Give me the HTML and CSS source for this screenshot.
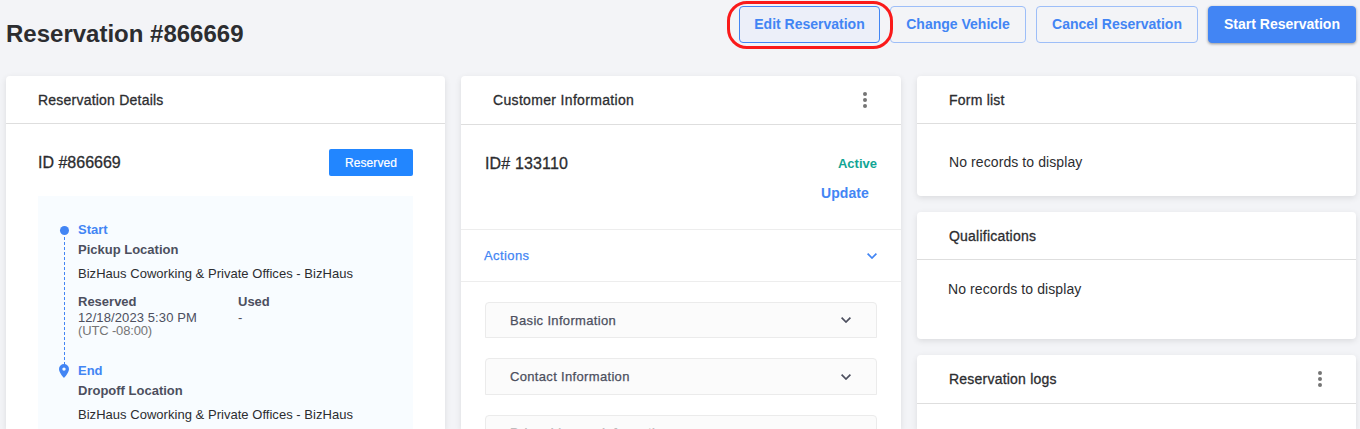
FILE: index.html
```html
<!DOCTYPE html>
<html lang="en">
<head>
<meta charset="UTF-8">
<meta name="viewport" content="width=device-width, initial-scale=1.0">
<title>Reservation #866669</title>
<link rel="stylesheet" href="styles.css">
</head>
<body>

    <header class="page-header">
        <h1>Reservation #866669</h1>
        <div class="actions">
            <button class="btn btn-edit">Edit Reservation<span class="highlight"></span></button>
            <button class="btn btn-change">Change Vehicle</button>
            <button class="btn btn-cancel">Cancel Reservation</button>
            <button class="btn btn-primary">Start Reservation</button>
        </div>
    </header>

    <main class="columns">

        <section class="card details">
            <div class="card-header"><h2>Reservation Details</h2></div>
            <div class="details-body">
                <div class="id-row">
                    <span class="id">ID #866669</span>
                    <span class="badge">Reserved</span>
                </div>
                <div class="timeline">
                    <div class="stop">
                        <div class="marker">
                            <span class="dot"></span>
                            <svg class="line" width="1" height="128"><path d="M.5 0V128" stroke="#4285f4" stroke-dasharray="3 2"/></svg>
                        </div>
                        <div class="stop-info">
                            <div class="stop-name">Start</div>
                            <div class="stop-label">Pickup Location</div>
                            <div class="stop-place">BizHaus Coworking &amp; Private Offices - BizHaus</div>
                            <div class="times">
                                <div>
                                    <b>Reserved</b>
                                    <div class="date">12/18/2023 5:30 PM</div>
                                    <div class="zone">(UTC -08:00)</div>
                                </div>
                                <div>
                                    <b>Used</b>
                                    <div>-</div>
                                </div>
                            </div>
                        </div>
                    </div>
                    <div class="stop">
                        <div class="marker">
                            <svg class="pin" width="10" height="14" viewBox="0 0 10 14"><path fill="#4285f4" fill-rule="evenodd" d="M5 0a5 5 0 0 0-5 5c0 3.700 5 9 5 9s5-5.300 5-9a5 5 0 0 0-5-5zm0 3.400a1.700 1.700 0 1 1 0 3.400 1.700 1.700 0 0 1 0-3.400z"/></svg>
                        </div>
                        <div class="stop-info">
                            <div class="stop-name">End</div>
                            <div class="stop-label">Dropoff Location</div>
                            <div class="stop-place">BizHaus Coworking &amp; Private Offices - BizHaus</div>
                        </div>
                    </div>
                </div>
            </div>
        </section>

        <section class="card customer">
            <div class="card-header">
                <h2 class="wide">Customer Information</h2>
                <svg class="dots" width="4" height="16" fill="#757575"><circle cx="2" cy="2" r="2"/><circle cx="2" cy="8" r="2"/><circle cx="2" cy="14" r="2"/></svg>
            </div>
            <div class="customer-top">
                <span class="id wide">ID# 133110</span>
                <div class="customer-status">
                    <span class="active">Active</span>
                    <a class="update">Update</a>
                </div>
            </div>
            <div class="actions-row">
                <span>Actions</span>
                <svg width="10" height="6" viewBox="0 0 10 6" fill="none" stroke="currentColor" stroke-width="1.700"><path d="M.6.6L5 5 9.400.6"/></svg>
            </div>
            <div class="panels">
                <div class="panel">
                    <span>Basic Information</span>
                    <svg width="10" height="6" viewBox="0 0 10 6" fill="none" stroke="currentColor" stroke-width="1.700"><path d="M.6.6L5 5 9.400.6"/></svg>
                </div>
                <div class="panel">
                    <span>Contact Information</span>
                    <svg width="10" height="6" viewBox="0 0 10 6" fill="none" stroke="currentColor" stroke-width="1.700"><path d="M.6.6L5 5 9.400.6"/></svg>
                </div>
                <div class="panel disabled">
                    <span>Driver License Information</span>
                </div>
            </div>
        </section>

        <div class="side">
            <section class="card forms">
                <div class="card-header"><h2>Form list</h2></div>
                <p class="empty">No records to display</p>
            </section>
            <section class="card qualifications">
                <div class="card-header"><h2>Qualifications</h2></div>
                <p class="empty">No records to display</p>
            </section>
            <section class="card logs">
                <div class="card-header">
                    <h2>Reservation logs</h2>
                    <svg class="dots" width="4" height="16" fill="#757575"><circle cx="2" cy="2" r="2"/><circle cx="2" cy="8" r="2"/><circle cx="2" cy="14" r="2"/></svg>
                </div>
            </section>
        </div>

    </main>

</body>
</html>
```

FILE: styles.css
```css
* {
    box-sizing: border-box;
}
body {
    font-family: "Liberation Sans", Arial, sans-serif;
    margin: 0;
    height: 429px;
    overflow: hidden;
    background-color: #f3f4f7;
    color: #2c2d30;
}
.page-header {
    display: flex;
    justify-content: space-between;
    align-items: flex-start;
    height: 76px;
    padding: 6px 4px 0 6px;
}
h1 {
    margin: 14px 0 0;
    font-size: 24px;
    line-height: 28px;
}
.actions {
    display: flex;
    gap: 10px;
}
.btn {
    position: relative;
    height: 37px;
    padding: 0 0 2px;
    font-family: inherit;
    font-size: 14px;
    font-weight: bold;
    white-space: nowrap;
    color: #4285f4;
    background-color: transparent;
    border: 1px solid #9dbef8;
    border-radius: 4px;
}
.btn-edit {
    width: 141px;
    background-color: #eceff9;
    border-color: #4285f4;
}
.btn-change {
    width: 136px;
}
.btn-cancel {
    width: 162px;
}
.btn-primary {
    width: 148px;
    color: #fff;
    background-color: #4285f4;
    border-color: #4285f4;
    box-shadow: 0 1px 3px rgba(0, 0, 0, 0.4);
}
/* red ring around the edit button */
.highlight {
    position: absolute;
    top: -6px;
    left: -13px;
    width: 166px;
    height: 48px;
    border: 3px solid #fa1a1a;
    border-radius: 20px;
    z-index: 1;
}
.columns {
    display: grid;
    grid-template-columns: 439px 440px 439px;
    gap: 16px;
    padding-left: 6px;
    align-items: start;
}
.card {
    background-color: #fff;
    border-radius: 4px;
    box-shadow: 0 2px 6px rgba(0, 0, 0, 0.1);
}
.card-header {
    display: flex;
    justify-content: space-between;
    align-items: center;
    height: 48px;
    padding: 0 34px 0 32px;
    border-bottom: 1px solid #dedede;
}
.customer .card-header,
.logs .card-header {
    height: 49px;
}
h2 {
    margin: 0;
    font-size: 14px;
    font-weight: normal;
    letter-spacing: 0.22px;
    -webkit-text-stroke: 0.3px;
}
h2.wide {
    letter-spacing: 0.33px;
}
.id {
    font-size: 16px;
    line-height: 20px;
    -webkit-text-stroke: 0.3px;
}
.id.wide {
    margin-top: 1px;
    letter-spacing: 0.15px;
}
.details,
.customer {
    height: 353px;
    border-radius: 4px 4px 0 0;
    overflow: hidden;
}
.details-body {
    padding: 25px 32px 0;
}
.id-row {
    display: flex;
    justify-content: space-between;
    align-items: center;
    margin-bottom: 20px;
}
.badge {
    width: 84px;
    height: 27px;
    line-height: 28px;
    font-size: 12px;
    letter-spacing: 0.1px;
    text-align: center;
    color: #fff;
    background-color: #2286ff;
    border-radius: 2px;
    -webkit-text-stroke: 0.2px;
}
.timeline {
    height: 300px;
    padding: 24px 0 0 21px;
    background-color: #f8fcff;
    font-size: 13px;
}
.stop {
    display: flex;
    gap: 8px;
    height: 141px;
}
.marker {
    display: flex;
    flex-direction: column;
    align-items: center;
    width: 11px;
    padding-top: 6px;
}
.dot {
    flex: none;
    width: 9px;
    height: 9px;
    margin-bottom: 2px;
    border-radius: 50%;
    background-color: #4285f4;
}
.line {
    flex: none;
}
.pin {
    margin: -3px 1px 0 0;
}
.stop-name,
.stop-label {
    line-height: 20px;
    font-weight: bold;
    color: #4c4f5e;
}
.stop-name {
    color: #4285f4;
}
.stop-place {
    margin-top: 4px;
    line-height: 20px;
    letter-spacing: 0.03px;
    white-space: nowrap;
}
.times {
    display: grid;
    grid-template-columns: 160px 1fr;
    margin-top: 9px;
    line-height: 14px;
    color: #4c4f5e;
}
.times b {
    display: block;
    margin-bottom: 1px;
    line-height: 17px;
}
.date {
    letter-spacing: 0.1px;
}
.zone {
    margin-top: -1px;
    letter-spacing: -0.15px;
    color: #757575;
}
.customer-top {
    display: flex;
    justify-content: space-between;
    height: 104px;
    padding: 28px 24px 0 24px;
}
.customer-status {
    display: flex;
    flex-direction: column;
    align-items: flex-end;
    font-weight: bold;
}
.active {
    font-size: 13px;
    line-height: 22px;
    color: #12a594;
}
.update {
    margin: 8px 8px 0 0;
    font-size: 14px;
    line-height: 20px;
    letter-spacing: 0.1px;
    color: #4285f4;
}
.actions-row {
    display: flex;
    justify-content: space-between;
    align-items: center;
    height: 53px;
    padding: 0 24px 0 23px;
    font-size: 13px;
    letter-spacing: 0.4px;
    color: #4285f4;
    border: 1px solid #ededed;
    border-width: 1px 0;
    -webkit-text-stroke: 0.25px;
}
.panels {
    display: flex;
    flex-direction: column;
    gap: 20px;
    padding: 20px 24px 0;
}
.panel {
    display: flex;
    flex: none;
    justify-content: space-between;
    align-items: center;
    height: 36px;
    padding: 0 25px 0 24px;
    font-size: 13px;
    letter-spacing: 0.33px;
    color: #4c4f5e;
    background-color: #fbfbfb;
    border: 1px solid #ebebeb;
    border-radius: 4px 4px 0 0;
    -webkit-text-stroke: 0.25px;
}
.panel + .panel {
    height: 37px;
}
.panel.disabled {
    padding-bottom: 2px;
    color: #bdbdbd;
}
.side {
    display: flex;
    flex-direction: column;
    gap: 16px;
}
.forms {
    height: 120px;
}
.qualifications {
    height: 127px;
}
.logs {
    height: 74px;
    border-radius: 4px 4px 0 0;
}
.empty {
    margin: 0;
    padding: 28px 32px 0;
    font-size: 14px;
    line-height: 20px;
    letter-spacing: 0.09px;
}
.qualifications .empty {
    padding: 19px 31px 0;
}
```
